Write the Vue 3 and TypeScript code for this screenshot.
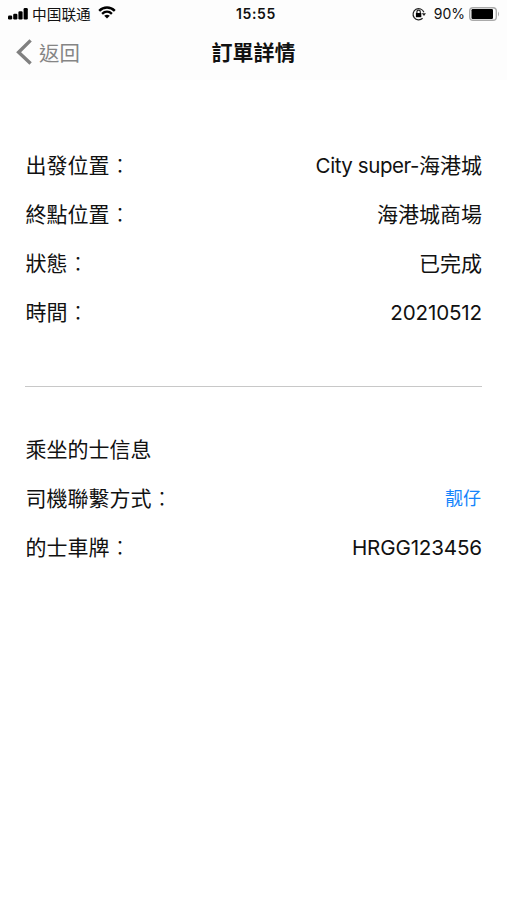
<script setup lang="ts">
interface Row { label: string; latin?: string; digits?: string; text?: string; link?: boolean }
const trip: Row[] = [
  { label: '出發位置', latin: 'City super-', text: '海港城' },
  { label: '終點位置', text: '海港城商場' },
  { label: '狀態', text: '已完成' },
  { label: '時間', digits: '20210512' },
]
const taxi: Row[] = [
  { label: '司機聯繫方式', text: '靓仔', link: true },
  { label: '的士車牌', digits: 'HRGG123456' },
]
</script>

<template>
  <div class="screen">
    <header>
      <div class="status">
        <div class="carrier">
          <svg width="20" height="12" viewBox="0 0 20 12"><rect x="0" y="7.5" width="4.2" height="4" rx="1.2"/><rect x="5.2" y="5.8" width="4.2" height="5.7" rx="1.2"/><rect x="10.4" y="3.2" width="4.2" height="8.3" rx="1.2"/><rect x="15.6" y="0" width="4.2" height="11.5" rx="1.2"/></svg>
          <span class="network">中国联通</span>
          <svg class="wifi" width="18" height="13" viewBox="0 0 18 13" fill="none" stroke="#000" stroke-width="2.4"><path d="M1.2 4.8C5.6.4 12.4.4 16.8 4.8M4.1 7.8c2.9-2.7 6.9-2.7 9.8 0"/><path d="M6.2 9.8Q9 7.6 11.8 9.8L9 12.6Z" fill="#000" stroke="none"/></svg>
        </div>
        <span class="clock">15:55</span>
        <div class="power">
          <svg class="lock" width="14" height="14" viewBox="0 0 14 14" fill="none" stroke="#222" stroke-width="1.2"><path d="M11.9 5.2A5.6 5.6 0 1 0 10.6 11.2"/><path d="M9.8 6.2h4.2L12 9Z" fill="#222" stroke="none"/><path d="M4.9 6.5V4.8a1.7 1.7 0 0 1 3.4 0v1.7"/><rect x="3.9" y="6" width="5.4" height="4.2" fill="#000" stroke="none"/></svg>
          <span>90%</span>
          <svg width="31" height="14" viewBox="0 0 31 14"><rect x=".7" y=".7" width="26.6" height="12.6" rx="3.3" fill="none" stroke="#aaa" stroke-width="1.4"/><rect x="2.5" y="2" width="21.5" height="10" rx="1.2"/><path d="M29 4.5q2 2.5 0 5Z" fill="#aaa"/></svg>
        </div>
      </div>
      <nav>
        <div class="back"><svg width="18" height="28" viewBox="0 0 18 28" fill="none" stroke="#808080" stroke-width="3.4"><path d="M14.6 2.4L2.6 14.2l12 11.4"/></svg><span>返回</span></div>
        <h1>訂單詳情</h1>
      </nav>
    </header>
    <main>
      <section class="trip">
        <div v-for="r in trip" :key="r.label" class="row">
          <span>{{ r.label }}<i class="colon">：</i></span>
          <span><span v-if="r.latin" class="latin">{{ r.latin }}</span><span v-if="r.digits" class="digits">{{ r.digits }}</span>{{ r.text }}</span>
        </div>
      </section>
      <section class="taxi">
        <div class="row">乘坐的士信息</div>
        <div v-for="r in taxi" :key="r.label" class="row">
          <span>{{ r.label }}<i class="colon">：</i></span>
          <span :class="{ link: r.link }"><span v-if="r.digits" class="digits">{{ r.digits }}</span>{{ r.text }}</span>
        </div>
      </section>
    </main>
  </div>
</template>

<style>
body { background: #fff; }
</style>
<style scoped>
.screen { width: 507px; height: 900px; overflow: hidden; background: #fff; color: #111; font-family: Inter, "Noto Sans CJK TC", sans-serif; }
header { height: 80px; background: #fdfdfd; }
.status { height: 27px; display: grid; grid-template-columns: 1fr auto 1fr; align-items: center; padding: 0 7px 0 8px; color: #111; font-size: 14px; line-height: 27px; }
.carrier, .power { display: flex; align-items: center; }
.network { font-family: "Noto Sans CJK SC", sans-serif; font-size: 14.7px; margin: 0 7px 0 4px; }
.wifi { margin-top: -2px; }
.clock { padding-left: 4px; font-weight: 600; letter-spacing: 0.6px; }
.power { justify-content: flex-end; }
.lock { margin-right: 8px; }
.power span { margin-right: 4px; }
nav { height: 52px; display: grid; grid-template-columns: 1fr auto 1fr; align-items: center; padding: 0 16px; }
.back { display: flex; align-items: center; gap: 5px; height: 28px; margin-top: -2px; color: #858585; font-size: 20.4px; }
h1 { margin: 0; font-size: 21px; font-weight: 600; line-height: 30px; }
main { padding: 61px 25px 0; }
.row { height: 49.2px; display: flex; align-items: center; justify-content: space-between; padding-left: 0.5px; font-size: 21px; line-height: 30px; white-space: nowrap; }
.trip { height: 245px; border-bottom: 1px solid #c8c8c8; }
.taxi { padding-top: 38px; }
.colon { font-style: normal; font-weight: 300; }
.latin { font-size: 20.5px; letter-spacing: -0.43px; }
.digits { font-size: 20.6px; letter-spacing: -0.15px; }
.link { padding-right: 1px; color: #1684fb; font-size: 18px; }
</style>
